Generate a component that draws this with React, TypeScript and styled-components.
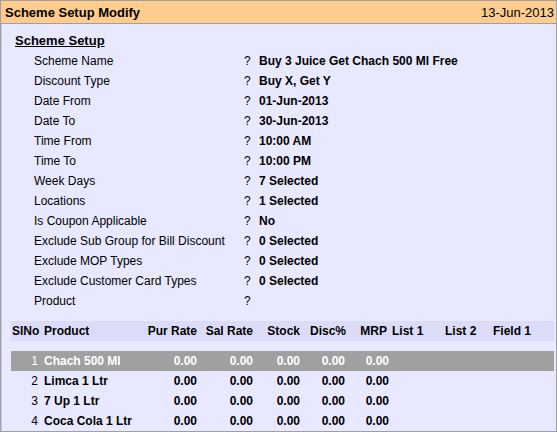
import React from 'react';
import styled, { createGlobalStyle } from 'styled-components';

type Field = Readonly<{ label: string; value: string }>;
type Item = Readonly<{ no: number; name: string; pur: string; sal: string; stock: string; disc: string; mrp: string }>;

const fields: Field[] = [
    { label: 'Scheme Name', value: 'Buy 3 Juice Get Chach 500 Ml Free' },
    { label: 'Discount Type', value: 'Buy X, Get Y' },
    { label: 'Date From', value: '01-Jun-2013' },
    { label: 'Date To', value: '30-Jun-2013' },
    { label: 'Time From', value: '10:00 AM' },
    { label: 'Time To', value: '10:00 PM' },
    { label: 'Week Days', value: '7 Selected' },
    { label: 'Locations', value: '1 Selected' },
    { label: 'Is Coupon Applicable', value: 'No' },
    { label: 'Exclude Sub Group for Bill Discount', value: '0 Selected' },
    { label: 'Exclude MOP Types', value: '0 Selected' },
    { label: 'Exclude Customer Card Types', value: '0 Selected' },
    { label: 'Product', value: '' },
];

const items: Item[] = [
    { no: 1, name: 'Chach 500 Ml', pur: '0.00', sal: '0.00', stock: '0.00', disc: '0.00', mrp: '0.00' },
    { no: 2, name: 'Limca 1 Ltr', pur: '0.00', sal: '0.00', stock: '0.00', disc: '0.00', mrp: '0.00' },
    { no: 3, name: '7 Up 1 Ltr', pur: '0.00', sal: '0.00', stock: '0.00', disc: '0.00', mrp: '0.00' },
    { no: 4, name: 'Coca Cola 1 Ltr', pur: '0.00', sal: '0.00', stock: '0.00', disc: '0.00', mrp: '0.00' },
];

const App = () => (
    <>
        <GlobalStyle />
        <Window>
            <TitleBar>
                <Title>Scheme Setup Modify</Title>
                <TitleDate>13-Jun-2013</TitleDate>
            </TitleBar>
            <Body>
                <SectionTitle>Scheme Setup</SectionTitle>
                <Form>
                    {fields.map(({ label, value }) => (
                        <FormRow key={label}>
                            <Label>{label}</Label>
                            <Prompt>?</Prompt>
                            <Value>{value}</Value>
                        </FormRow>
                    ))}
                </Form>
                <TableHead>
                    <Cell align="left" pad={1}>SlNo</Cell>
                    <Cell align="left" pad={3}>Product</Cell>
                    <Cell>Pur Rate</Cell>
                    <Cell>Sal Rate</Cell>
                    <Cell>Stock</Cell>
                    <Cell>Disc%</Cell>
                    <Cell pad={4}>MRP</Cell>
                    <Cell align="left" pad={1}>List 1</Cell>
                    <Cell align="left" pad={3}>List 2</Cell>
                    <Cell align="left" pad={3}>Field 1</Cell>
                </TableHead>
                <TableBody>
                    {items.map((item) => (
                        <TableRow key={item.no} selected={item.no === 1}>
                            <Cell pad={3} light>{item.no}</Cell>
                            <Cell align="left" pad={3}>{item.name}</Cell>
                            <Cell>{item.pur}</Cell>
                            <Cell>{item.sal}</Cell>
                            <Cell>{item.stock}</Cell>
                            <Cell pad={3}>{item.disc}</Cell>
                            <Cell>{item.mrp}</Cell>
                            <Cell />
                            <Cell />
                            <Cell />
                        </TableRow>
                    ))}
                </TableBody>
            </Body>
        </Window>
    </>
);

const GlobalStyle = createGlobalStyle`
    html, body {
        margin: 0;
        padding: 0;
        background: #ffffff;
    }
    body {
        font-family: "Liberation Sans", Arial, sans-serif;
        color: #000000;
    }
`;

const Window = styled.div`
    width: 557px;
    height: 432px;
    box-sizing: border-box;
    border: 1px solid #a0a0a0;
    display: flex;
    flex-direction: column;
    overflow: hidden;
    background: #e8e8ff;
`;

const TitleBar = styled.div`
    height: 23px;
    box-sizing: border-box;
    border-bottom: 1px solid #a0a0a0;
    background: #ffcc8e;
    display: flex;
    align-items: center;
    justify-content: space-between;
    padding: 0 2px 0 4px;
    font-size: 13px;
    flex-shrink: 0;
`;

const Title = styled.div`
    font-weight: bold;
`;

const TitleDate = styled.div``;

const Body = styled.div`
    flex: 1;
    padding: 7px 1px 0 9px;
    border-left: 1px solid #c8c8d8;
    display: flex;
    flex-direction: column;
`;

const SectionTitle = styled.div`
    height: 20px;
    line-height: 20px;
    padding-left: 4px;
    font-size: 13px;
    font-weight: bold;
    text-decoration: underline;
`;

const Form = styled.div`
    display: flex;
    flex-direction: column;
    padding-left: 23px;
`;

const FormRow = styled.div`
    display: grid;
    grid-template-columns: 210px 15px 220px;
    height: 20px;
    line-height: 20px;
    font-size: 12px;
    white-space: nowrap;
`;

const Label = styled.div``;

const Prompt = styled.div``;

const Value = styled.div`
    font-weight: bold;
`;

const columns = '30px 104px 54px 56px 47px 46px 43px 51px 48px 63px';

const TableHead = styled.div`
    margin-top: 10px;
    margin-right: 1px;
    display: grid;
    grid-template-columns: ${columns};
    height: 20px;
    line-height: 20px;
    background: #dcdcf8;
    font-size: 12px;
    font-weight: bold;
`;

const TableBody = styled.div`
    margin-top: 10px;
    display: flex;
    flex-direction: column;
`;

const TableRow = styled.div<{ selected?: boolean }>`
    display: grid;
    grid-template-columns: ${columns};
    height: 20px;
    line-height: 20px;
    margin-right: 1px;
    font-size: 12px;
    font-weight: bold;
    background: ${({ selected }) => (selected ? '#a0a0a0' : 'transparent')};
    color: ${({ selected }) => (selected ? '#ffffff' : '#000000')};
`;

const Cell = styled.div<{ align?: 'left' | 'right'; pad?: number; light?: boolean }>`
    text-align: ${({ align = 'right' }) => align};
    padding-${({ align = 'right' }) => align}: ${({ pad = 2 }) => pad}px;
    font-weight: ${({ light }) => (light ? 'normal' : 'inherit')};
    white-space: nowrap;
    overflow: hidden;
`;

export default App;
